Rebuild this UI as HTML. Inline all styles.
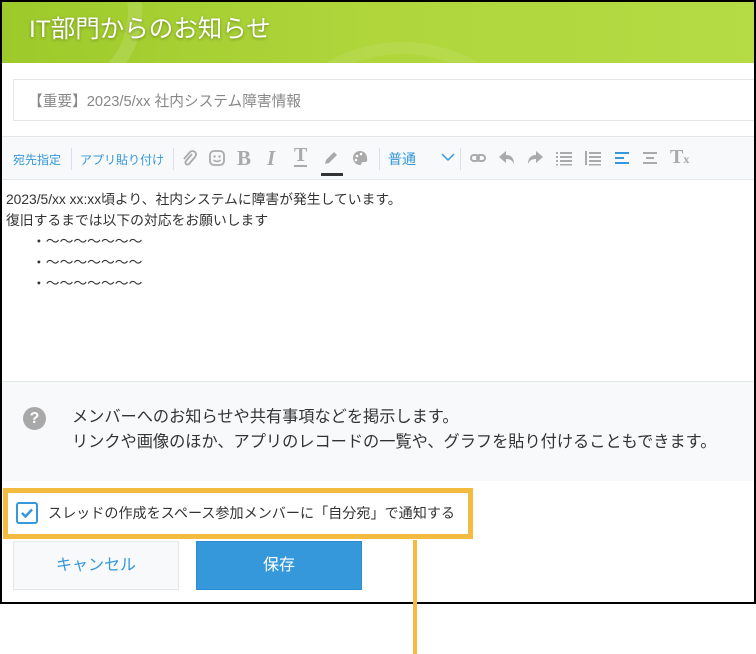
<!DOCTYPE html>
<html><head><meta charset="utf-8"><style>
*{margin:0;padding:0;box-sizing:border-box}
body{width:756px;height:654px;background:#fff;position:relative;overflow:hidden;font-family:"Liberation Sans","Noto Sans CJK JP",sans-serif;color:#333}
.frame{position:absolute;left:0;top:0;width:756px;height:604px;border:2px solid #000;overflow:hidden;background:#fff}
.hdr{position:absolute;left:0;top:0;width:752px;height:61px;background:linear-gradient(90deg,#9dca2a,#b0d63c 50%,#b5db45);overflow:hidden}
.hdr .t{position:absolute;left:27px;top:8px;font-size:24.5px;color:#fff;text-shadow:0 1px 3px rgba(0,0,0,.35)}
.hdr .c1{position:absolute;left:-40px;top:-80px;width:180px;height:180px;border-radius:50%;border:14px solid rgba(255,255,255,.13)}
.hdr .c2{position:absolute;left:250px;top:40px;width:300px;height:300px;border-radius:50%;border:12px solid rgba(255,255,255,.08)}
.title{position:absolute;left:11px;top:77px;width:745px;height:42px;border:1px solid #e3e7e8;background:#fff;font-size:14.7px;color:#888;padding:10px 14px}
.tb{position:absolute;left:0;top:134px;width:752px;height:44px;background:#f7f9fa;border-top:1px solid #e3e7e8;border-bottom:1px solid #e3e7e8}
.tb span{position:absolute;top:14px;font-size:12px;color:#3498db}
.sep{position:absolute;top:11px;width:1px;height:22px;background:#dde}
.ic{position:absolute;top:12px}
.ed{position:absolute;left:4px;top:187px;font-size:13.8px;line-height:21px;color:#333}
.help{position:absolute;left:0;top:379px;width:752px;height:100px;background:#f7f9fa;border-top:1px solid #e3e7e8}
.help .q{position:absolute;left:21px;top:25px;width:23px;height:23px;border-radius:50%;background:#a8a8a8;color:#fff;font-weight:bold;font-size:16px;text-align:center;line-height:23px}
.help .tx{position:absolute;left:70px;top:23px;font-size:16.2px;line-height:25px;color:#333}
.chk{position:absolute;left:1px;top:486px;width:470px;height:51px;border:5px solid #f3bb3f;background:#fff}
.chk .b{position:absolute;left:8px;top:9px;width:22px;height:22px;border:2px solid #3498db;border-radius:3px}
.chk .l{position:absolute;left:40px;top:10px;font-size:14.1px;color:#333}
.btn{position:absolute;top:539px;height:49px;width:166px;font-size:16px;text-align:center;line-height:47px}
.cancel{left:11px;background:#f7f9fa;border:1px solid #e3e7e8;color:#3498db}
.save{left:194px;background:#3498db;color:#fff;border:1px solid #2e8bcf}
.vl{position:absolute;left:413px;top:540px;width:4px;height:114px;background:#f3bb3f}
</style></head><body>
<div class="frame">
<div class="hdr"><div class="c1"></div><div class="c2"></div><div class="t">IT部門からのお知らせ</div></div>
<div class="title">【重要】2023/5/xx 社内システム障害情報</div>
<div class="tb">
<span style="left:11px">宛先指定</span><div class="sep" style="left:69px"></div>
<span style="left:78px">アプリ貼り付け</span><div class="sep" style="left:171px"></div>
<svg class="ic" style="left:178px" width="18" height="18" viewBox="0 0 18 18"><path d="M12 5 L6 12 a2 2 0 0 0 3 3 L15 8 a3.5 3.5 0 0 0 -5 -5 L4 10" fill="none" stroke="#aaa" stroke-width="1.8"/></svg>
<svg class="ic" style="left:206px" width="18" height="18" viewBox="0 0 18 18"><rect x="2" y="2" width="14" height="14" rx="4" fill="none" stroke="#aaa" stroke-width="1.8"/><circle cx="6.5" cy="7.5" r="1.2" fill="#aaa"/><circle cx="11.5" cy="7.5" r="1.2" fill="#aaa"/><path d="M5.5 11 q3.5 3 7 0" fill="none" stroke="#aaa" stroke-width="1.5"/></svg>
<span style="left:235px;top:9px;font:bold 21px 'Liberation Serif',serif;color:#aaa">B</span>
<span style="left:265px;top:9px;font:italic bold 21px 'Liberation Serif',serif;color:#aaa">I</span>
<span style="left:292px;top:9px;font:bold 20px 'Liberation Serif',serif;color:#aaa;border-bottom:2px solid #aaa;line-height:19px">T</span>
<svg class="ic" style="left:320px" width="18" height="18" viewBox="0 0 18 18"><path d="M3 15 L4 11 L12 3 L15 6 L7 14 Z" fill="#aaa"/></svg>
<div style="position:absolute;left:319px;top:36px;width:22px;height:3px;background:#333"></div>
<svg class="ic" style="left:349px" width="18" height="18" viewBox="0 0 18 18"><path d="M9 2 a7 7 0 1 0 0 14 c2 0 1-3 3-3 h2 a2 2 0 0 0 2-3 A7 7 0 0 0 9 2z" fill="#aaa"/><circle cx="6" cy="7" r="1.3" fill="#fff"/><circle cx="10" cy="5" r="1.3" fill="#fff"/><circle cx="5" cy="11" r="1.3" fill="#fff"/></svg>
<div class="sep" style="left:377px"></div>
<span style="left:386px;top:12px;font-size:14px">普通</span>
<svg class="ic" style="left:439px;top:15px" width="14" height="10" viewBox="0 0 14 10"><path d="M1 2 L7 8 L13 2" fill="none" stroke="#3498db" stroke-width="1.5"/></svg>
<div class="sep" style="left:458px"></div>
<svg class="ic" style="left:467px" width="18" height="18" viewBox="0 0 18 18"><rect x="2" y="6" width="8" height="6" rx="3" fill="none" stroke="#aaa" stroke-width="2"/><rect x="8" y="6" width="8" height="6" rx="3" fill="none" stroke="#aaa" stroke-width="2"/></svg>
<svg class="ic" style="left:496px" width="18" height="18" viewBox="0 0 18 18"><path d="M1 8 L8 2 V6 C13 6 16 9 16 15 C14 11 12 10 8 10 V14 Z" fill="#aaa"/></svg>
<svg class="ic" style="left:524px" width="18" height="18" viewBox="0 0 18 18"><path d="M17 8 L10 2 V6 C5 6 2 9 2 15 C4 11 6 10 10 10 V14 Z" fill="#aaa"/></svg>
<svg class="ic" style="left:553px" width="18" height="18" viewBox="0 0 18 18" fill="#aaa"><rect x="1" y="3" width="2" height="2"/><rect x="5" y="3" width="12" height="2"/><rect x="1" y="7" width="2" height="2"/><rect x="5" y="7" width="12" height="2"/><rect x="1" y="11" width="2" height="2"/><rect x="5" y="11" width="12" height="2"/><rect x="1" y="15" width="2" height="1.5"/><rect x="5" y="15" width="12" height="1.5"/></svg>
<svg class="ic" style="left:582px" width="18" height="18" viewBox="0 0 18 18" fill="#aaa"><rect x="1" y="2" width="2" height="14"/><rect x="5" y="3" width="12" height="2"/><rect x="5" y="7" width="12" height="2"/><rect x="5" y="11" width="12" height="2"/><rect x="5" y="15" width="12" height="1.5"/></svg>
<svg class="ic" style="left:611px" width="18" height="18" viewBox="0 0 18 18" fill="#3498db"><rect x="2" y="3" width="14" height="2"/><rect x="2" y="8" width="9" height="2"/><rect x="2" y="13" width="14" height="2"/></svg>
<svg class="ic" style="left:639px" width="18" height="18" viewBox="0 0 18 18" fill="#aaa"><rect x="2" y="3" width="14" height="2"/><rect x="5" y="8" width="8" height="2"/><rect x="2" y="13" width="14" height="2"/></svg>
<span style="left:668px;top:9px;font:bold 20px 'Liberation Serif',serif;color:#aaa">T<small style="font-size:12px">x</small></span>
</div>
<div class="ed">2023/5/xx xx:xx頃より、社内システムに障害が発生しています。<br>復旧するまでは以下の対応をお願いします<br><span style="padding-left:26px">・〜〜〜〜〜〜〜</span><br><span style="padding-left:26px">・〜〜〜〜〜〜〜</span><br><span style="padding-left:26px">・〜〜〜〜〜〜〜</span></div>
<div class="help"><div class="q">?</div><div class="tx">メンバーへのお知らせや共有事項などを掲示します。<br>リンクや画像のほか、アプリのレコードの一覧や、グラフを貼り付けることもできます。</div></div>
<div class="chk"><div class="b"><svg width="18" height="18" viewBox="0 0 18 18" style="position:absolute;left:0;top:0"><path d="M4 9 L7.5 12.5 L14 5.5" fill="none" stroke="#3498db" stroke-width="2.5"/></svg></div><div class="l">スレッドの作成をスペース参加メンバーに「自分宛」で通知する</div></div>
<div class="btn cancel">キャンセル</div>
<div class="btn save">保存</div>
</div>
<div class="vl"></div>
</body></html>
